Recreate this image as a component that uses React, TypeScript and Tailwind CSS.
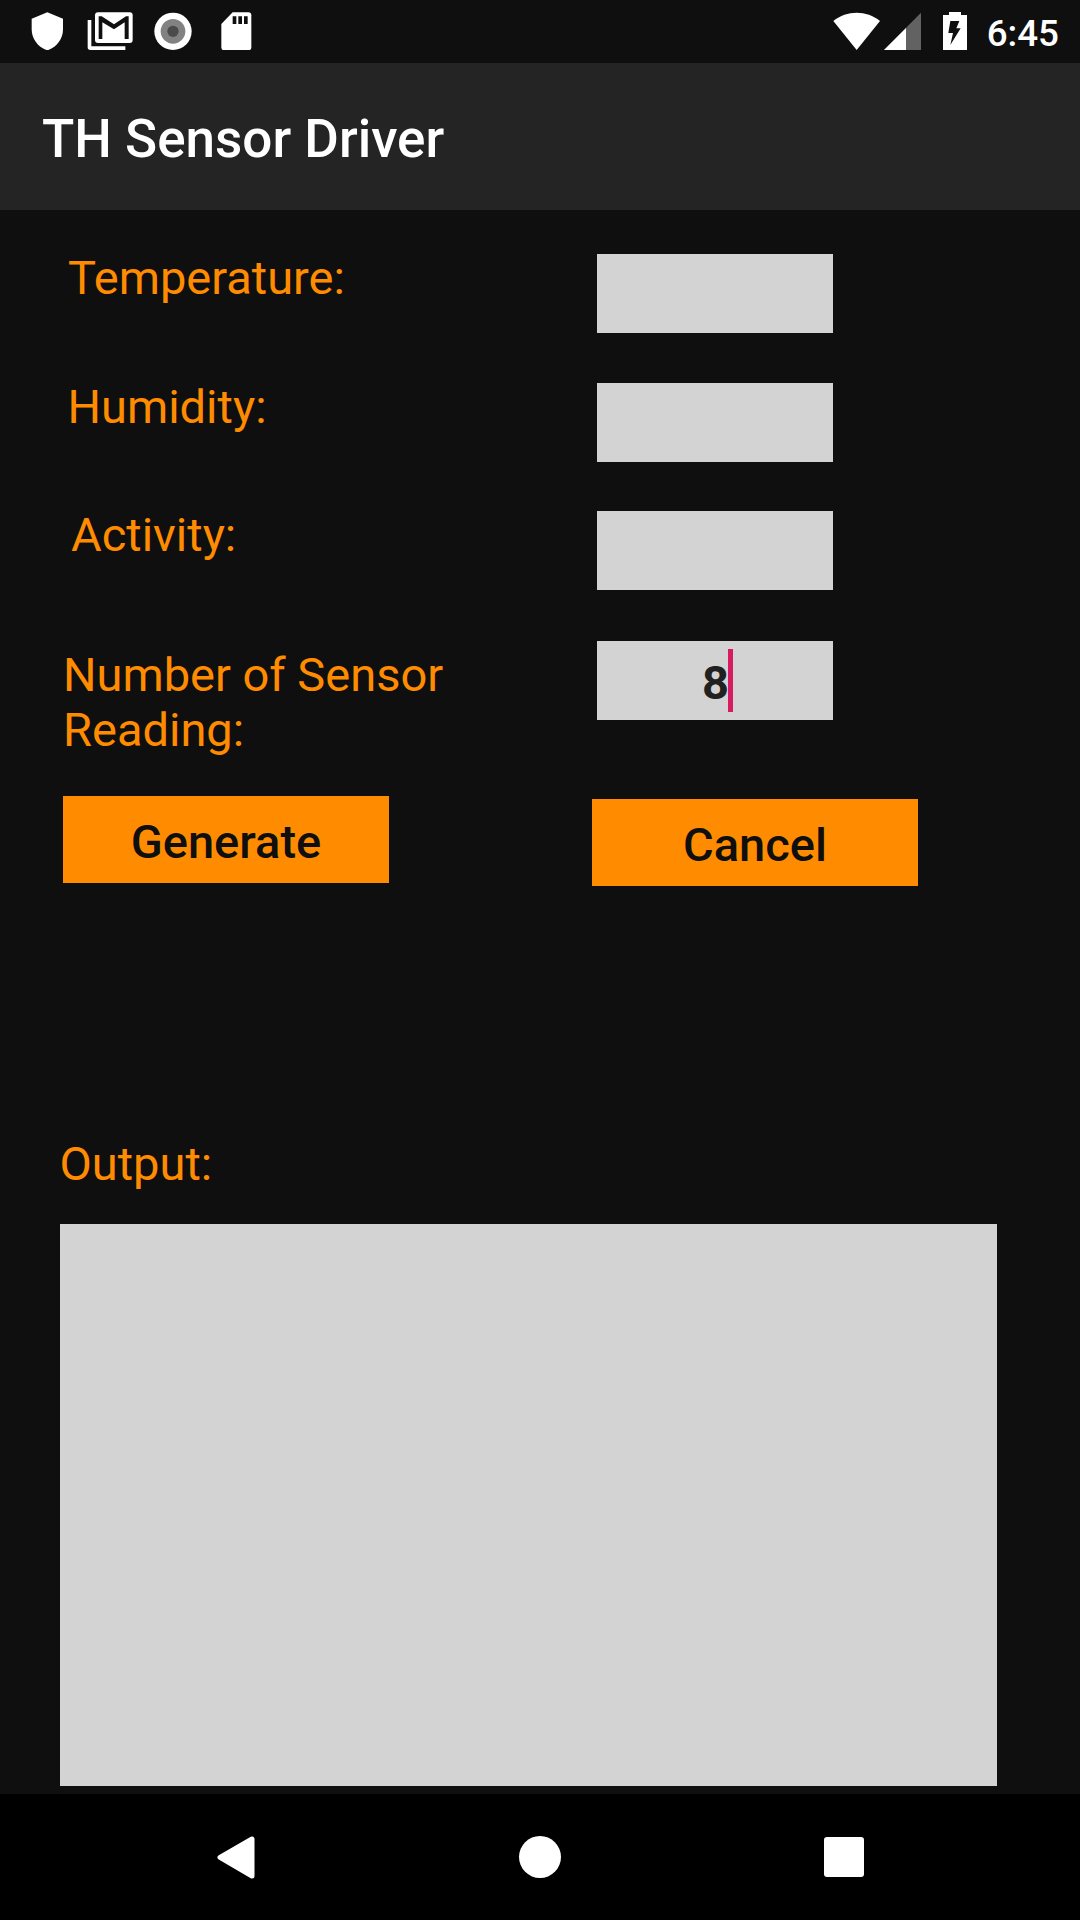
import React from "react";

function ShieldIcon() {
  return (
    <svg className="h-[38px] w-8" viewBox="93 36 96 114" fill="#fff">
      <path d="M142 37 L189 56 V88 C189 117 170 142 142 151 C114 142 95 117 95 88 V56 Z" />
    </svg>
  );
}

function MailStackIcon() {
  return (
    <svg className="ml-6 h-[38px] w-[46px]" viewBox="262 36 138 114">
      <path d="M264 60 H275 V139 H377 V150 H272 Q264 150 264 142 Z" fill="#fff" />
      <rect x="286" y="37" width="113" height="92" rx="9" fill="#fff" />
      <path d="M297 117 V49 H306 L343 73 L379 49 H387 V117 H375 V67 L343 88 L308 67 V117 Z" fill="#0f0f0f" />
    </svg>
  );
}

function RecordIcon() {
  return (
    <svg className="ml-[21px] h-[38px] w-[38px]" viewBox="463 36 114 114">
      <circle cx="520" cy="94" r="56" fill="#fff" />
      <circle cx="520" cy="94" r="37" fill="#828282" />
      <circle cx="520" cy="94" r="17" fill="#4b4b4b" />
    </svg>
  );
}

function SdCardIcon() {
  return (
    <svg className="ml-[29px] h-[38px] w-[31px]" viewBox="663 36 93 114">
      <path d="M698 37 H745 Q754 37 754 46 V142 Q754 151 745 151 H673 Q664 151 664 142 V72 Z" fill="#fff" />
      <path d="M698 49 h11 v23 h-11z M715 49 h11 v23 h-11z M732 49 h11 v23 h-11z" fill="#0f0f0f" />
    </svg>
  );
}

function WifiIcon() {
  return (
    <svg className="h-[38px] w-[47px]" viewBox="67 37 141 114" fill="#fff">
      <path d="M138 151 L68 64 C108 31 168 31 208 64 Z" />
    </svg>
  );
}

function SignalIcon() {
  return (
    <svg className="ml-1 h-[38px] w-[37px]" viewBox="222 37 111 114">
      <path d="M222 151 L333 39 V151 Z" fill="#626262" />
      <path d="M222 151 L288 85 V151 Z" fill="#fff" />
    </svg>
  );
}

function BatteryIcon() {
  return (
    <svg className="ml-[22px] h-[38px] w-6" viewBox="399 36 72 114">
      <path d="M417 36 H453 V45 H471 V150 H399 V45 H417 Z" fill="#fff" />
      <path d="M421 63 H448 L439 85 H452 L421 135 L429 99 H415 Z" fill="#0f0f0f" />
    </svg>
  );
}

function StatusBar() {
  return (
    <div className="flex h-[63px] justify-between">
      <div className="flex pt-3 pl-[31px]">
        <ShieldIcon />
        <MailStackIcon />
        <RecordIcon />
        <SdCardIcon />
      </div>
      <div className="flex pt-3 pr-[21px] text-white">
        <WifiIcon />
        <SignalIcon />
        <BatteryIcon />
        <span className="ml-5 text-[36.75px] leading-[43px] font-medium">6:45</span>
      </div>
    </div>
  );
}

function Field({ value }: { value?: string }) {
  return (
    <div className="flex h-[79px] w-[236px] shrink-0 items-center justify-center bg-[#d3d3d3] text-[#212121]">
      {value && (
        <div className="relative text-[47px] leading-[55px] font-bold">
          <span className="relative top-[1.5px] left-[0.5px]">{value}</span>
          <span className="absolute -top-1 left-full -ml-[0.5px] h-[63px] w-[5px] bg-[#d81b60]" />
        </div>
      )}
    </div>
  );
}

function ActionButton({ children }: { children: React.ReactNode }) {
  return (
    <button className="h-[87px] w-[326px] bg-[#ff8c00] pt-1 text-[47px] leading-[55px] font-medium text-[#0f0f0f]">
      {children}
    </button>
  );
}

export default function App() {
  return (
    <div className="flex h-[1920px] w-[1080px] flex-col overflow-hidden bg-[#0f0f0f] font-['Roboto',sans-serif]">
      <StatusBar />
      <header className="flex h-[147px] items-center bg-[#242424] pt-[5px] pl-[42px] text-[53px] leading-[62px] font-medium text-white">
        TH Sensor Driver
      </header>
      <main className="flex h-[1584px] flex-col text-[47px] leading-[55px] text-[#ff8c00]">
        <div className="mt-[44px] flex h-[79px]">
          <div className="-mt-1 w-[597px] pl-[68px]">Temperature:</div>
          <Field />
        </div>
        <div className="mt-[50px] flex h-[79px]">
          <div className="-mt-1 w-[597px] pl-[67.5px]">Humidity:</div>
          <Field />
        </div>
        <div className="mt-[49px] flex h-[79px]">
          <div className="-mt-1 w-[597px] pl-[71px]">Activity:</div>
          <Field />
        </div>
        <div className="mt-[51px] flex h-[155px]">
          <div className="w-[597px] pt-1.5 pr-[120px] pl-[63px]">Number of Sensor Reading:</div>
          <Field value="8" />
        </div>
        <div className="flex h-[90px] justify-between pr-[162px] pl-[63px]">
          <ActionButton>Generate</ActionButton>
          <div className="pt-[3px]">
            <ActionButton>Cancel</ActionButton>
          </div>
        </div>
        <div className="mt-[250px] pl-[59.5px]">Output:</div>
        <div className="mt-[33px] ml-[60px] h-[562px] w-[937px] bg-[#d3d3d3]" />
      </main>
      <nav className="flex h-[126px] bg-black">
        <svg className="mt-[41px] ml-[216px] h-11 w-10" viewBox="0 0 40 44">
          <path d="M4 22.300 L36 4 V41 Z" fill="#fff" stroke="#fff" strokeWidth="5" strokeLinejoin="round" />
        </svg>
        <div className="mt-[42px] ml-[263px] size-[42px] rounded-full bg-white" />
        <div className="mt-[43px] ml-[263px] h-10 w-10 rounded-[3px] bg-white" />
      </nav>
    </div>
  );
}
